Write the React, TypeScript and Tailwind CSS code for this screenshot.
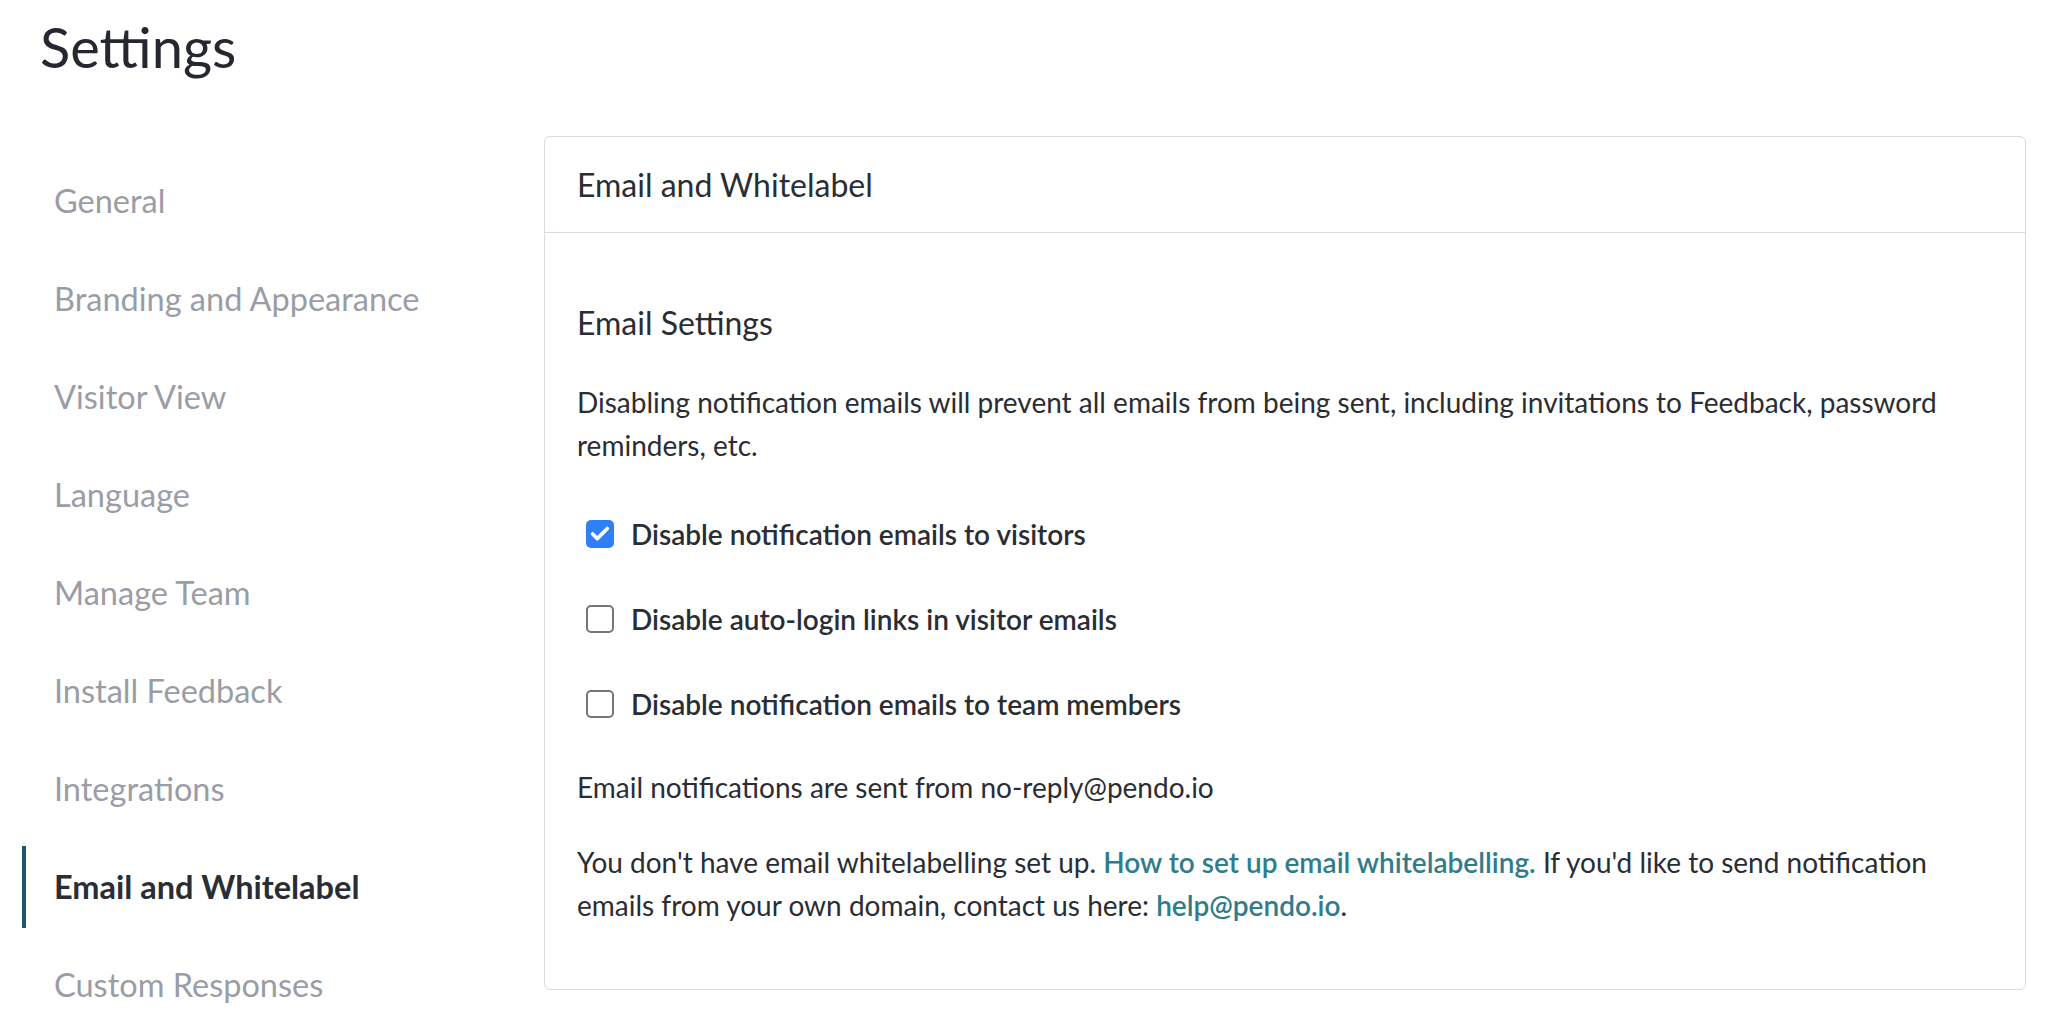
import { Check } from "lucide-react";

const navItems = [
  "General",
  "Branding and Appearance",
  "Visitor View",
  "Language",
  "Manage Team",
  "Install Feedback",
  "Integrations",
  "Email and Whitelabel",
  "Custom Responses",
];

const options = [
  { label: "Disable notification emails to visitors", checked: true },
  { label: "Disable auto-login links in visitor emails", checked: false },
  { label: "Disable notification emails to team members", checked: false },
];

function Checkbox({ checked }: { checked: boolean }) {
  if (checked) {
    return (
      <span className="w-[28px] h-[28px] rounded-[5px] bg-[#2f7ff6] flex items-center justify-center shrink-0">
        <Check className="w-[22px] h-[22px] text-white" strokeWidth={4} />
      </span>
    );
  }
  return (
    <span className="w-[28px] h-[28px] rounded-[5px] border-2 border-[#767676] bg-white shrink-0" />
  );
}

export default function App() {
  const active = "Email and Whitelabel";

  return (
    <div
      className="min-h-screen bg-white text-[#2a2d34]"
      style={{ fontFamily: "Lato, 'Liberation Sans', sans-serif" }}
    >
      {/* Title */}
      <h1 className="pl-[40px] mt-[15px] text-[56px] leading-[64px] font-normal text-[#25282f]">
        Settings
      </h1>

      <div className="flex items-start mt-[57px] pr-[26px]">
        {/* Sidebar */}
        <nav className="w-[544px] shrink-0 pl-[22px] pt-[24px] flex flex-col gap-[16px]">
          {navItems.map((item) => (
            <div
              key={item}
              className={
                item === active
                  ? "h-[82px] flex items-center border-l-4 border-[#23566a] pl-[28px] text-[32.5px] font-bold text-[#2a2d34]"
                  : "h-[82px] flex items-center border-l-4 border-transparent pl-[28px] text-[32.5px] text-[#9a9da5]"
              }
            >
              {item}
            </div>
          ))}
        </nav>

        {/* Card */}
        <section className="flex-1 border border-[#dadbe2] rounded-[6px]">
          <div className="h-[96px] border-b border-[#dadbe2] px-[32px] flex items-center text-[32px]">
            Email and Whitelabel
          </div>

          <div className="px-[32px] pt-[70px] pb-[62px] text-[28px]">
            <h3 className="text-[32px] leading-[40px]">Email Settings</h3>

            <p className="mt-[38px] leading-[43px]">
              Disabling notification emails will prevent all emails from being sent, including
              invitations to Feedback, password
              <br />
              reminders, etc.
            </p>

            <div className="mt-[45px] flex flex-col gap-[42px]">
              {options.map((o) => (
                <label key={o.label} className="h-[43px] flex items-center gap-[17px] pl-[9px]">
                  <Checkbox checked={o.checked} />
                  <span className="font-semibold">{o.label}</span>
                </label>
              ))}
            </div>

            <p className="mt-[41px] leading-[43px]">
              Email notifications are sent from no-reply@pendo.io
            </p>

            <p className="mt-[32px] leading-[43px]">
              You don't have email whitelabelling set up.{" "}
              <a href="#" className="text-[#2f7d8c] font-semibold">
                How to set up email whitelabelling.
              </a>{" "}
              If you'd like to send notification
              <br />
              emails from your own domain, contact us here:{" "}
              <a href="#" className="text-[#2f7d8c] font-semibold">
                help@pendo.io
              </a>
              .
            </p>
          </div>
        </section>
      </div>
    </div>
  );
}
